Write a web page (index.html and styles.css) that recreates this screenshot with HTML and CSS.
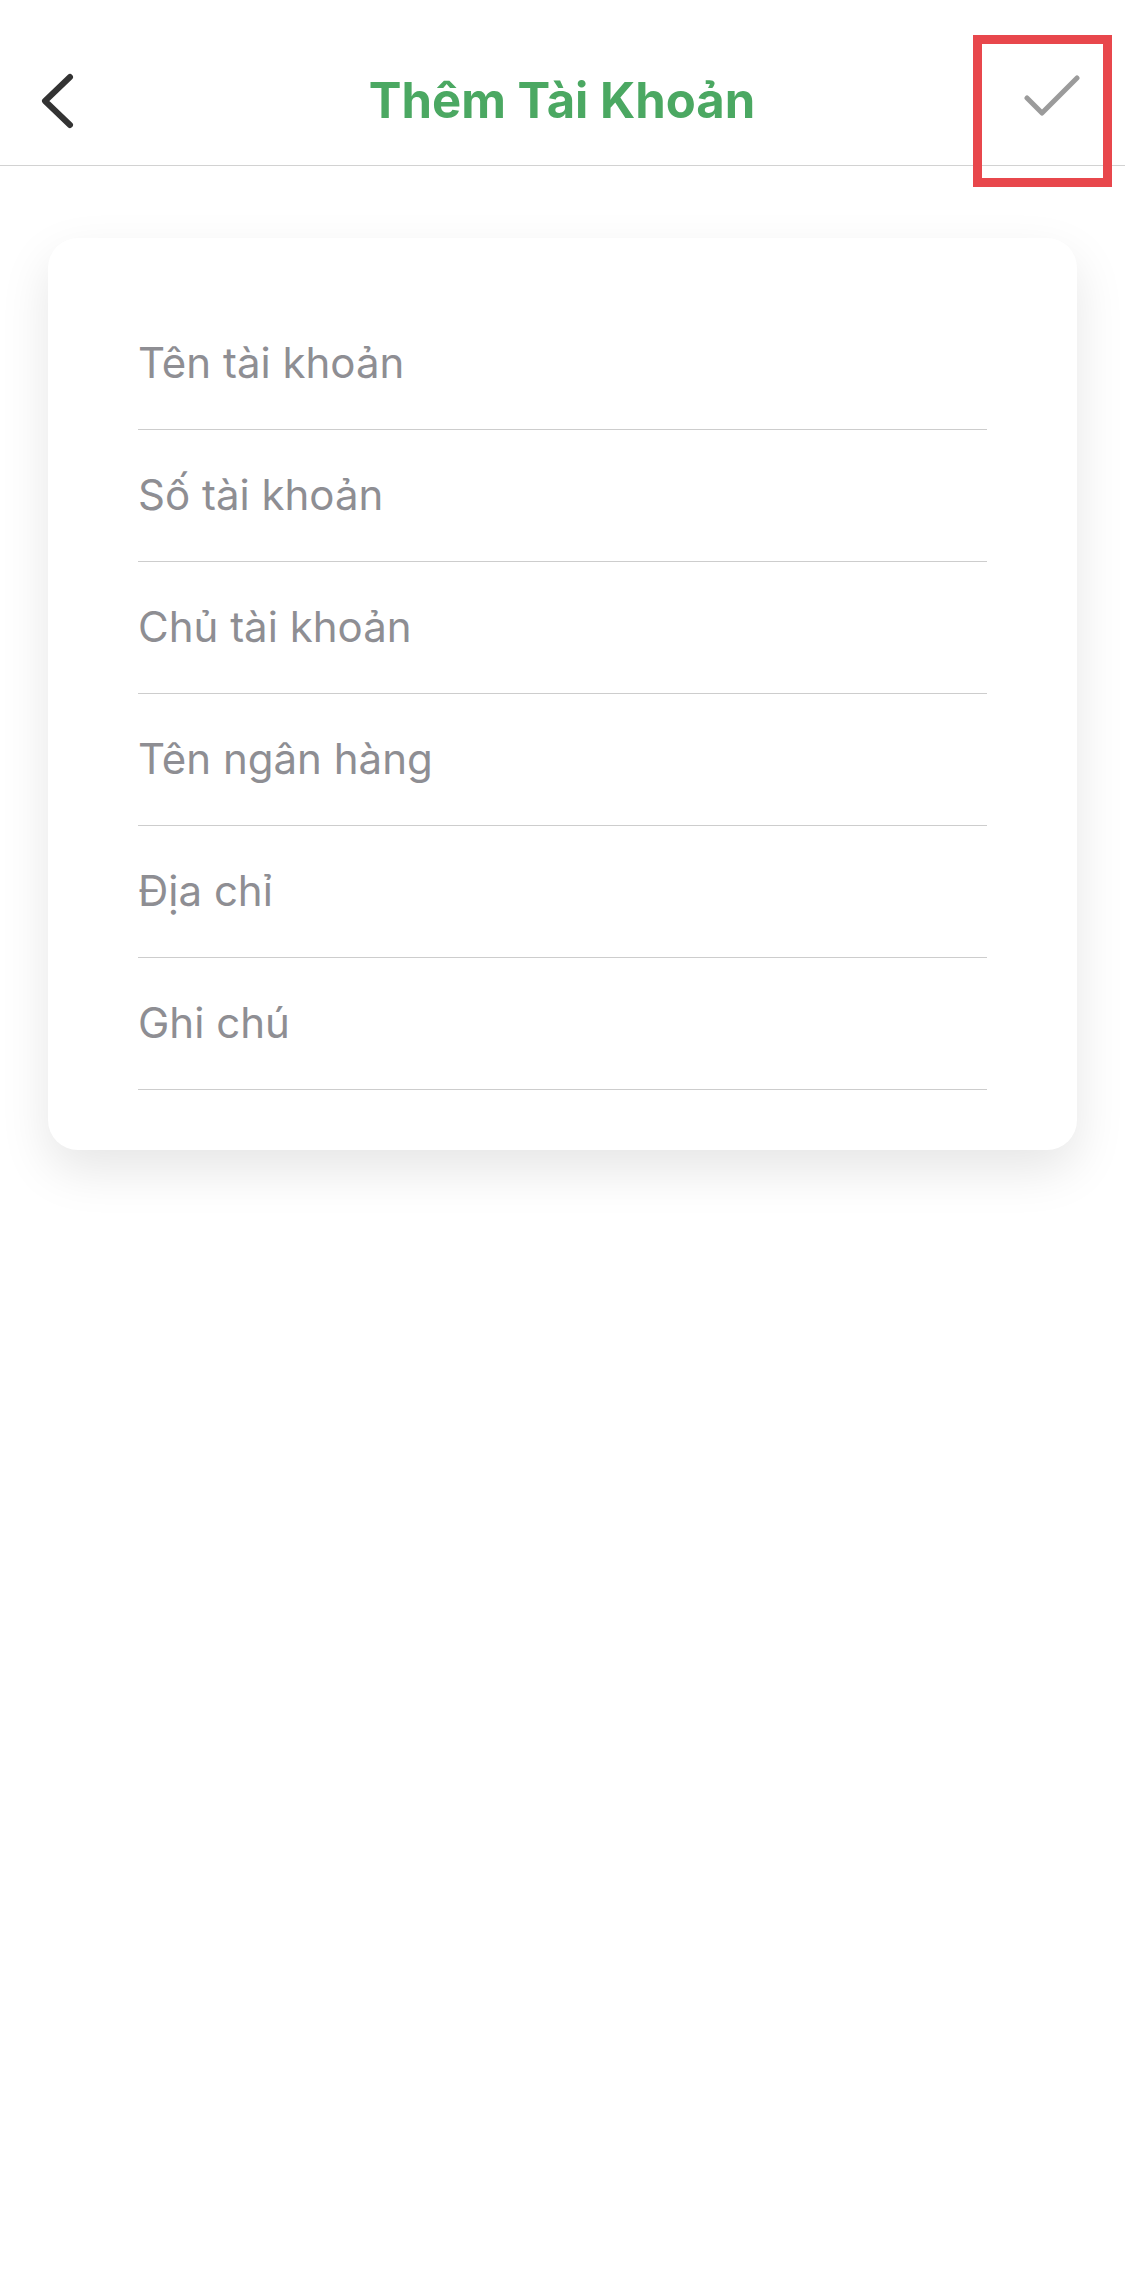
FILE: index.html
```html
<!DOCTYPE html>
<html lang="vi">
<head>
<meta charset="utf-8">
<title>Thêm Tài Khoản</title>
<link rel="stylesheet" href="styles.css">
</head>
<body>
<header class="nav">
  <button class="nav-btn back" aria-label="Quay lại">
    <svg width="40" height="60" viewBox="0 0 40 60"><path d="M32 6 L7 30 L32 54" fill="none" stroke="#333333" stroke-width="6" stroke-linecap="round" stroke-linejoin="round"/></svg>
  </button>
  <h1 class="nav-title">Thêm Tài Khoản</h1>
  <button class="nav-btn done" aria-label="Xong">
    <svg width="64" height="52" viewBox="0 0 64 52"><path d="M5 23 L20 38 L55 3" fill="none" stroke="#9b9b9b" stroke-width="5" stroke-linecap="round" stroke-linejoin="round"/></svg>
  </button>
  <div class="highlight"></div>
</header>
<main class="content">
  <section class="card">
    <div class="field"><span class="placeholder">Tên tài khoản</span></div>
    <div class="field"><span class="placeholder">Số tài khoản</span></div>
    <div class="field"><span class="placeholder">Chủ tài khoản</span></div>
    <div class="field"><span class="placeholder">Tên ngân hàng</span></div>
    <div class="field"><span class="placeholder">Địa chỉ</span></div>
    <div class="field"><span class="placeholder">Ghi chú</span></div>
  </section>
</main>
</body>
</html>
```

FILE: styles.css
```css
* { box-sizing: border-box; }
html, body {
  margin: 0;
  padding: 0;
  background: #ffffff;
  font-family: "Inter", "Roboto", "Noto Sans", sans-serif;
}
body {
  min-height: 2269px;
}
.nav {
  position: relative;
  height: 166px;
  border-bottom: 1px solid #d2d2d2;
  display: flex;
  align-items: center;
  justify-content: space-between;
  padding: 36px 39px 0 38px;
}
.nav-btn {
  background: none;
  border: 0;
  padding: 0;
  display: flex;
  align-items: center;
  width: 90px;
  height: 80px;
}
.back { justify-content: flex-start; }
.done { justify-content: flex-end; }
.nav-title {
  margin: 0;
  font-size: 49px;
  font-weight: 700;
  color: #4ba862;
  letter-spacing: 0;
}
.highlight {
  position: absolute;
  left: 973px;
  top: 35px;
  width: 139px;
  height: 152px;
  border: 9px solid #e8474c;
}
.content {
  padding: 72px 48px 120px 48px;
}
.card {
  background: #ffffff;
  border-radius: 30px;
  box-shadow: 0 20px 50px rgba(0, 0, 0, 0.1);
  padding: 60px 90px 60px 90px;
}
.field {
  height: 132px;
  border-bottom: 1px solid #cdcdcd;
  display: flex;
  align-items: center;
  padding-bottom: 3px;
}
.placeholder {
  font-size: 42px;
  color: #8e8e93;
  font-weight: 400;
}
```
